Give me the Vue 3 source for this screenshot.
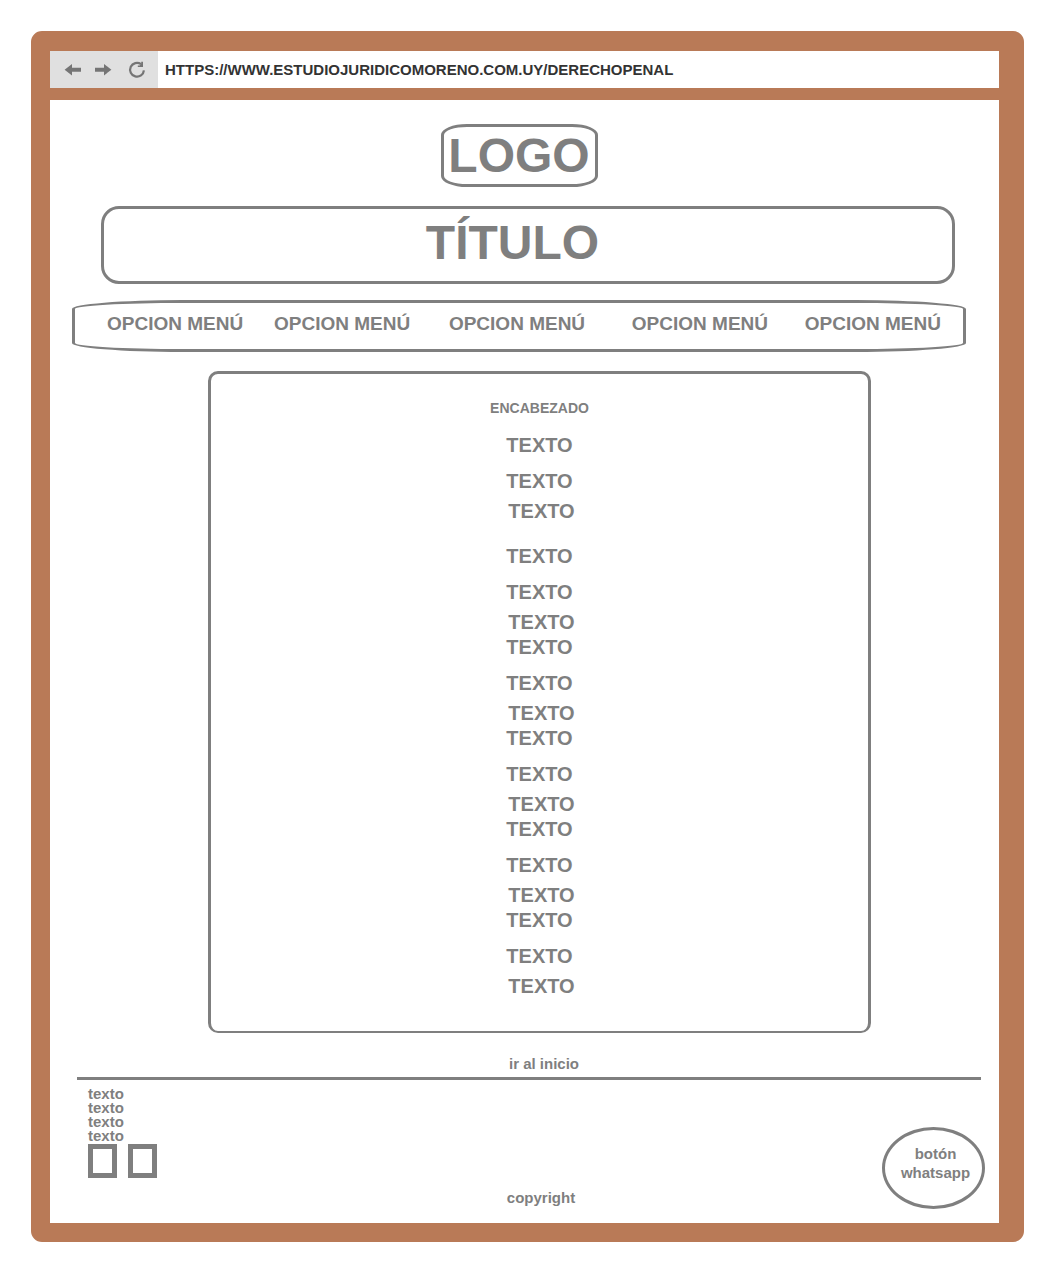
<script setup>
import { ref } from 'vue'

const url = ref('HTTPS://WWW.ESTUDIOJURIDICOMORENO.COM.UY/DERECHOPENAL')
const menu = Array.from({ length: 5 }, () => 'OPCION MENÚ')
const groups = Array.from({ length: 6 }, () => ['TEXTO', 'TEXTO', 'TEXTO'])
const contact = ['texto', 'texto', 'texto', 'texto']
</script>

<template>
  <div id="inicio" class="browser">
    <div class="toolbar">
      <div class="controls">
        <button type="button" aria-label="Atrás">
          <svg width="18" height="18" viewBox="0 0 18 18">
            <path d="M.6 8.7 8 3V6.7H17V10.7H8V14.4Z" fill="#757575" />
          </svg>
        </button>
        <button type="button" aria-label="Adelante">
          <svg width="18" height="18" viewBox="0 0 18 18">
            <path d="M17.4 8.7 10 3V6.7H1V10.7H10V14.4Z" fill="#757575" />
          </svg>
        </button>
        <button type="button" class="reload" aria-label="Recargar">
          <svg width="18" height="18" viewBox="0 0 18 18">
            <path d="M13 3.1A6.9 6.9 0 1 0 15.9 9.3" fill="none" stroke="#757575" stroke-width="2.2" />
            <path d="M15 .8V6H9.8V4.4H11.6L13.2 2.8V.8Z" fill="#757575" />
          </svg>
        </button>
      </div>
      <input v-model="url" class="address" type="text" aria-label="Dirección" spellcheck="false" />
    </div>

    <div class="page">
      <header>
        <div class="logo">LOGO</div>
        <h1 class="title">TÍTULO</h1>
        <nav class="menu">
          <a v-for="(item, i) in menu" :key="i" href="#inicio">{{ item }}</a>
        </nav>
      </header>

      <main class="content">
        <h2>ENCABEZADO</h2>
        <div v-for="(group, g) in groups" :key="g" class="group">
          <p v-for="(line, i) in group" :key="i">{{ line }}</p>
        </div>
      </main>

      <div class="to-top">
        <a href="#inicio">ir al inicio</a>
      </div>

      <footer>
        <div class="contact">
          <p v-for="(line, i) in contact" :key="i">{{ line }}</p>
          <div class="social">
            <a href="#inicio" aria-label="Red social 1"></a>
            <a href="#inicio" aria-label="Red social 2"></a>
          </div>
        </div>
        <p class="copyright">copyright</p>
        <button type="button" class="whatsapp">botón<br />whatsapp</button>
      </footer>
    </div>
  </div>
</template>

<style>
body {
  background: #fff;
}
</style>

<style scoped>
* {
  box-sizing: border-box;
  margin: 0;
}

.browser {
  margin: 31px 32px 27px 31px;
  border: solid #b97a57;
  border-width: 20px 25px 19px 19px;
  border-radius: 11px;
  background: #b97a57;
  color: #7f7f7f;
  font: bold 15px/22px "Liberation Sans", Arial, sans-serif;
}

.toolbar {
  display: flex;
  height: 37px;
  margin-bottom: 12px;
  background: #fff;
}

.controls {
  display: flex;
  align-items: center;
  gap: 12px;
  width: 108px;
  padding-left: 14px;
  background: #e0e0e0;
}

button {
  padding: 0;
  border: 0;
  background: none;
  color: inherit;
  font: inherit;
  cursor: pointer;
}

.controls svg {
  display: block;
}

.reload {
  margin-left: 4px;
}

.address {
  flex: 1;
  min-width: 0;
  padding: 0 7px;
  border: 0;
  outline: 0;
  background: #fff;
  color: #333;
  font: inherit;
}

.page {
  padding: 24px 14px 14px 22px;
  background: #fff;
}

a {
  color: inherit;
  text-decoration: none;
}

header {
  margin-right: 19px;
}

.logo {
  width: 157px;
  margin: 0 auto 19px;
  border: 3px solid #7f7f7f;
  border-radius: 26px / 11px;
  font-size: 48px;
  line-height: 57px;
  text-align: center;
}

.title {
  margin: 0 11px 16px 29px;
  padding: 0 31px 4px 0;
  border: 3px solid #7f7f7f;
  border-radius: 18px;
  font-size: 48px;
  line-height: 68px;
  text-align: center;
}

.menu {
  display: grid;
  grid-template-columns: 167fr 175fr 183fr 173fr 136fr;
  margin-bottom: 19px;
  padding: 10px 22px 14px 32px;
  border: 3px solid #7f7f7f;
  border-radius: 110px / 9px;
  font-size: 19px;
  white-space: nowrap;
}

.content {
  margin: 0 114px 20px 136px;
  padding: 23px 0 34px;
  border: 3px solid #7f7f7f;
  border-bottom-width: 2px;
  border-radius: 10px;
  text-align: center;
}

h2 {
  margin-bottom: 15px;
  font-size: 14px;
}

.group {
  display: grid;
  margin-bottom: 3px;
  font-size: 20px;
}

.group:first-of-type {
  margin-bottom: 23px;
}

.group:last-child {
  margin-bottom: 0;
}

.group p:nth-child(2) {
  margin: 14px 0 8px;
}

.group p:last-child {
  padding-left: 4px;
}

.to-top {
  margin-bottom: 2px;
  padding-left: 31px;
  text-align: center;
}

footer {
  display: flex;
  align-items: flex-end;
  position: relative;
  padding: 50px 0 0 16px;
}

footer::before {
  content: "";
  position: absolute;
  inset: 0 4px auto 5px;
  height: 3px;
  background: #7f7f7f;
}

.contact {
  align-self: flex-start;
  width: 112px;
  margin-top: -40px;
  line-height: 14px;
}

.social {
  display: flex;
  gap: 11px;
  margin-top: 1px;
}

.social a {
  width: 29px;
  height: 34px;
  border: 5px solid #7f7f7f;
}

.copyright {
  flex: 1;
  text-align: center;
}

.whatsapp {
  width: 103px;
  height: 82px;
  padding: 0 0 10px 4px;
  border: 3px solid #7f7f7f;
  border-radius: 50%;
  line-height: 19px;
}
</style>
